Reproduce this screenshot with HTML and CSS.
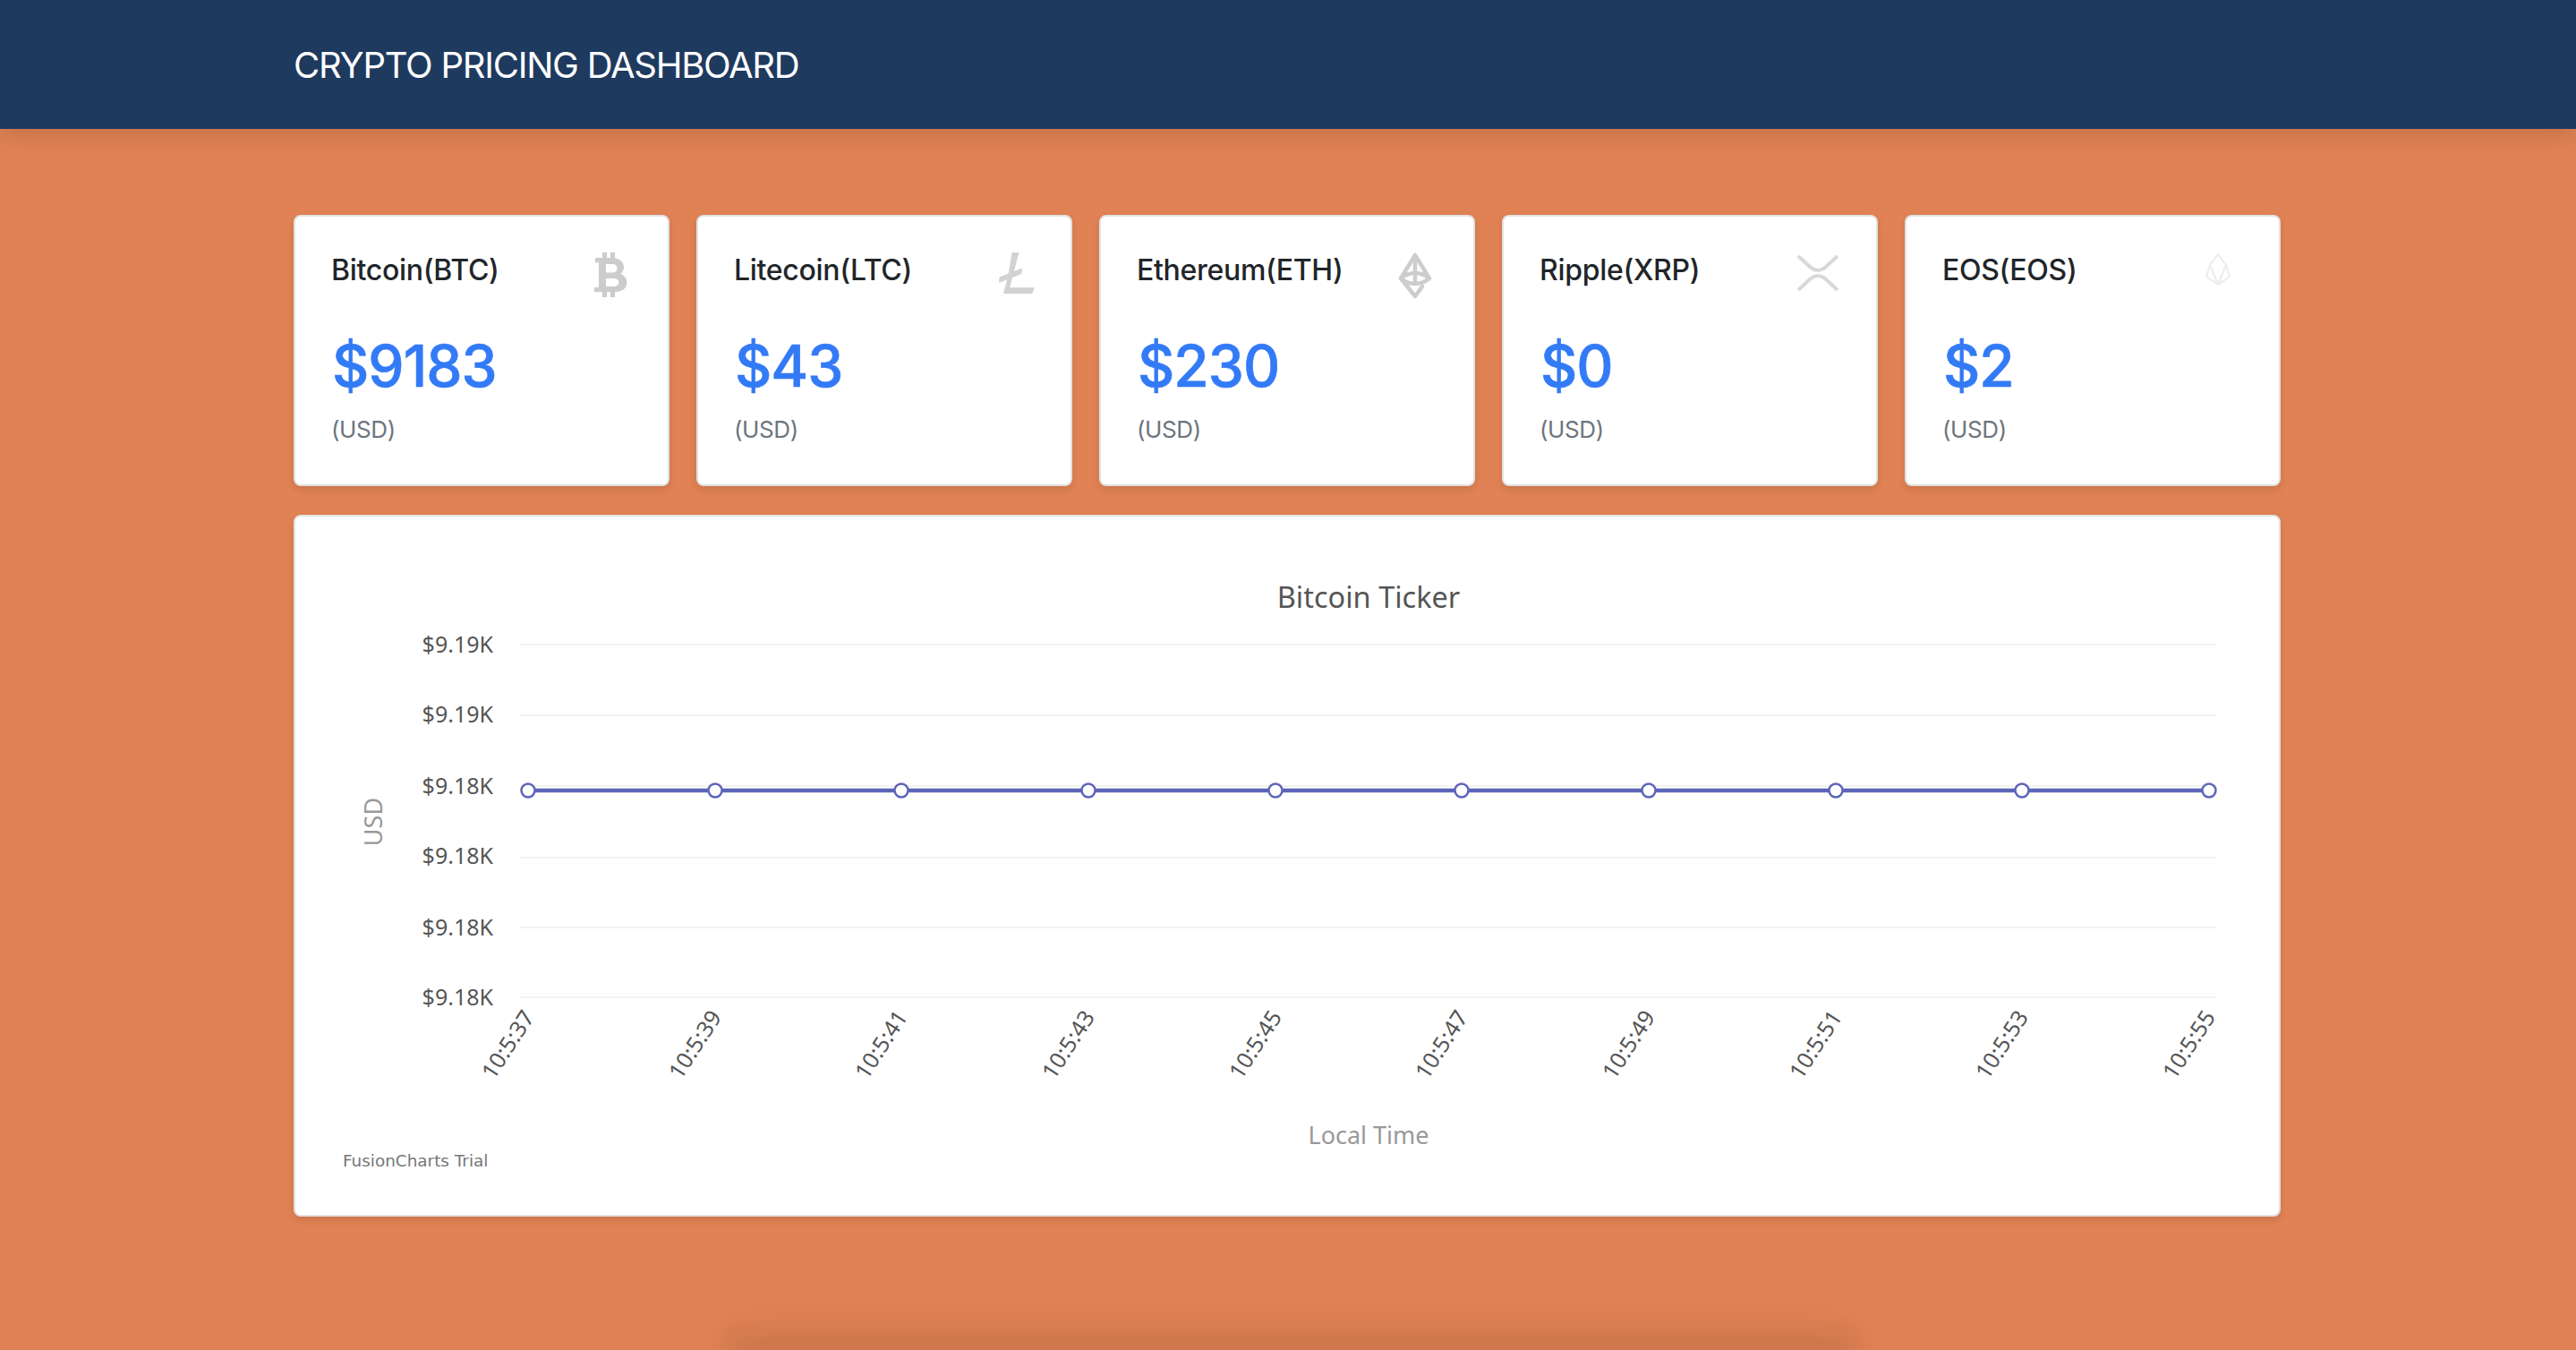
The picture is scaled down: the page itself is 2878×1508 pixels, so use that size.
FILE: index.html
```html
<!DOCTYPE html>
<html>
<head>
    <title>Crypto Pricing Dashboard</title>
    <link rel="stylesheet" href="styles.css">
</head>
<body>
<div class="page">
    <header class="navbar">
        <div class="container navbar-title">CRYPTO PRICING DASHBOARD</div>
    </header>
    <main class="container content">
        <div class="card-row">
            <div class="card price-card">
                <div class="card-head">
                    <span class="coin-name">Bitcoin(BTC)</span>
                    <svg class="coin-icon icon-btc" viewBox="0 0 37 50"><path fill-rule="evenodd" d="M9 0h5v6h4V0h5v6.300C29.500 7.500 33 11.500 33 16.500c0 3.400-1.500 6-4.200 7.500 4.700 1.300 7.600 4.800 7.600 9.800 0 6.200-4.400 9.800-13.400 10.400V50h-5v-5.700h-4V50H9v-5.700H0v-5.300h5V11.500H1V6h8zM13 13v9.500h7.500c3.200 0 5-1.800 5-4.800 0-3-1.800-4.700-5-4.700zM13 29v9h8.500c3.600 0 5.800-1.700 5.800-4.500 0-2.900-2.200-4.500-5.800-4.500z"/></svg>
                </div>
                <div class="coin-price">$9183</div>
                <div class="coin-unit">(USD)</div>
            </div>
            <div class="card price-card">
                <div class="card-head">
                    <span class="coin-name">Litecoin(LTC)</span>
                    <svg class="coin-icon icon-ltc" viewBox="0 0 40 46"><path d="M14.700 0h7.700L17 21l9-3.600-.7 6.700-10.200 3.900-2.900 11.300H40l-2.700 6.700H5l4-15.500-9 3.300.7-6.300 10-3.900z"/></svg>
                </div>
                <div class="coin-price">$43</div>
                <div class="coin-unit">(USD)</div>
            </div>
            <div class="card price-card">
                <div class="card-head">
                    <span class="coin-name">Ethereum(ETH)</span>
                    <svg class="coin-icon icon-eth" viewBox="0 0 38 52" fill="none" stroke-linejoin="round" stroke-linecap="round"><path d="M19 3 3 29l16 20 8-11M19 3l16 26c-5 4-10.500 6-16 6s-11-2-16-6M19 3v32M3 29c5-4 10.500-6 16-6s11 2 16 6"/></svg>
                </div>
                <div class="coin-price">$230</div>
                <div class="coin-unit">(USD)</div>
            </div>
            <div class="card price-card">
                <div class="card-head">
                    <span class="coin-name">Ripple(XRP)</span>
                    <svg class="coin-icon icon-xrp" viewBox="0 0 46 42" fill="none"><path d="M1 2l13 12c5.500 5 12.500 5 18 0L45 2M1 40l13-12c5.500-5 12.500-5 18 0l13 12"/></svg>
                </div>
                <div class="coin-price">$0</div>
                <div class="coin-unit">(USD)</div>
            </div>
            <div class="card price-card">
                <div class="card-head">
                    <span class="coin-name">EOS(EOS)</span>
                    <svg class="coin-icon icon-eos" viewBox="0 0 30 38" fill="none" stroke-linejoin="round"><path d="M15 2 6 14 2 27l13 9 13-9-4-13zM6 14l9 22 9-22"/></svg>
                </div>
                <div class="coin-price">$2</div>
                <div class="coin-unit">(USD)</div>
            </div>
        </div>
        <div class="card chart-card">
            <svg class="chart" viewBox="329 576 2216 780">
                <text class="chart-title" x="1528" y="678">Bitcoin Ticker</text>

                <g class="grid">
                    <line x1="580" x2="2476" y1="719" y2="719"/>
                    <line x1="580" x2="2476" y1="798" y2="798"/>
                    <line x1="580" x2="2476" y1="877" y2="877"/>
                    <line x1="580" x2="2476" y1="957" y2="957"/>
                    <line x1="580" x2="2476" y1="1035" y2="1035"/>
                    <line x1="580" x2="2476" y1="1113" y2="1113"/>
                </g>

                <g class="y-labels">
                    <text x="550" y="728">$9.19K</text>
                    <text x="550" y="806">$9.19K</text>
                    <text x="550" y="886">$9.18K</text>
                    <text x="550" y="964">$9.18K</text>
                    <text x="550" y="1044">$9.18K</text>
                    <text x="550" y="1122">$9.18K</text>
                </g>

                <text class="axis-title" transform="translate(426 917) rotate(-90)">USD</text>
                <text class="axis-title" x="1528" y="1277">Local Time</text>

                <line class="series" x1="589" x2="2467" y1="882" y2="882"/>
                <g class="points">
                    <circle cx="589" cy="882" r="7.500"/>
                    <circle cx="798" cy="882" r="7.500"/>
                    <circle cx="1006" cy="882" r="7.500"/>
                    <circle cx="1215" cy="882" r="7.500"/>
                    <circle cx="1424" cy="882" r="7.500"/>
                    <circle cx="1632" cy="882" r="7.500"/>
                    <circle cx="1841" cy="882" r="7.500"/>
                    <circle cx="2050" cy="882" r="7.500"/>
                    <circle cx="2258" cy="882" r="7.500"/>
                    <circle cx="2467" cy="882" r="7.500"/>
                </g>

                <g class="x-labels">
                    <text transform="translate(597 1135) rotate(-57)">10:5:37</text>
                    <text transform="translate(806 1135) rotate(-57)">10:5:39</text>
                    <text transform="translate(1014 1135) rotate(-57)">10:5:41</text>
                    <text transform="translate(1223 1135) rotate(-57)">10:5:43</text>
                    <text transform="translate(1432 1135) rotate(-57)">10:5:45</text>
                    <text transform="translate(1640 1135) rotate(-57)">10:5:47</text>
                    <text transform="translate(1849 1135) rotate(-57)">10:5:49</text>
                    <text transform="translate(2058 1135) rotate(-57)">10:5:51</text>
                    <text transform="translate(2266 1135) rotate(-57)">10:5:53</text>
                    <text transform="translate(2475 1135) rotate(-57)">10:5:55</text>
                </g>

                <text class="trial" x="382" y="1302">FusionCharts Trial</text>
            </svg>
        </div>
    </main>
    <div class="bottom-shadow"></div>
</div>
</body>
</html>
```

FILE: styles.css
```css
body {
    font-family: Inter, "Liberation Sans", sans-serif;
    background-color: #e08254;
    margin: 0;
}
.page {
    height: 1508px;
    overflow: hidden;
    position: relative;
}
.container {
    width: 2220px;
    margin-left: 328px;
}
.navbar {
    height: 144px;
    background-color: #1f3a5f;
    box-shadow: 0 4px 26px rgba(0, 0, 0, 0.16);
    display: flex;
    align-items: center;
}
.navbar-title {
    color: #fff;
    font-size: 40px;
    letter-spacing: -1.250px;
}
.content {
    padding-top: 96px;
}
.card-row {
    display: grid;
    grid-template-columns: repeat(5, 420px);
    gap: 30px;
    margin-bottom: 32px;
}
.card {
    box-sizing: border-box;
    background-color: #fff;
    border: 2px solid #e2e2e2;
    border-radius: 8px;
    box-shadow: 0 4px 8px rgba(0, 0, 0, 0.1);
}
.price-card {
    height: 303px;
    padding: 40px 40px 0 40px;
}
.card-head {
    display: flex;
    justify-content: space-between;
    align-items: flex-start;
    height: 88px;
}
.coin-name {
    font-size: 32px;
    font-weight: 500;
    letter-spacing: -0.3px;
    color: #212529;
}
.coin-icon {
    display: block;
}
.icon-btc {
    width: 37px;
    height: 50px;
    fill: #ccc;
    margin-right: 5px;
}
.icon-ltc {
    width: 40px;
    height: 46px;
    fill: #d2d2d2;
}
.icon-eth {
    width: 38px;
    height: 52px;
    stroke: #cdcdcd;
    stroke-width: 4.500;
    margin-right: 6px;
}
.icon-xrp {
    width: 46px;
    height: 42px;
    stroke: #d8d8d8;
    stroke-width: 4;
    margin: 2px 2px 0 0;
}
.icon-eos {
    width: 30px;
    height: 38px;
    stroke: #ececec;
    stroke-width: 2;
    margin-right: 13px;
}
.coin-price {
    margin-left: 1px;
    font-size: 64px;
    font-weight: 500;
    letter-spacing: -1px;
    line-height: 78px;
    color: #337af6;
    -webkit-text-stroke: 0.6px #337af6;
}
.coin-unit {
    margin-top: 16px;
    font-size: 26px;
    letter-spacing: -0.4px;
    color: #6c757d;
}
.chart-card {
    height: 784px;
}
.chart {
    display: block;
    width: 2216px;
    height: 780px;
    font-family: "Noto Sans", sans-serif;
}
.chart-title {
    font-size: 32.500px;
    fill: #555;
    text-anchor: middle;
}
.grid line {
    stroke: #f3f3f3;
    stroke-width: 2;
}
.y-labels text {
    font-size: 25px;
    fill: #555;
    text-anchor: end;
}
.x-labels text {
    font-size: 25px;
    fill: #555;
    text-anchor: end;
}
.axis-title {
    font-size: 27px;
    fill: #999;
    text-anchor: middle;
}
.series {
    stroke: #5d65b8;
    stroke-width: 4.500;
}
.points circle {
    fill: #fff;
    stroke: #5d65b8;
    stroke-width: 2.500;
}
.trial {
    font-family: "DejaVu Sans", sans-serif;
    font-size: 18.400px;
    fill: #777;
}
.bottom-shadow {
    position: absolute;
    left: 811px;
    top: 1510px;
    width: 1263px;
    height: 100px;
    box-shadow: 0 -26px 22px rgba(0, 0, 0, 0.06), 0 -40px 70px rgba(0, 0, 0, 0.025);
}
```
